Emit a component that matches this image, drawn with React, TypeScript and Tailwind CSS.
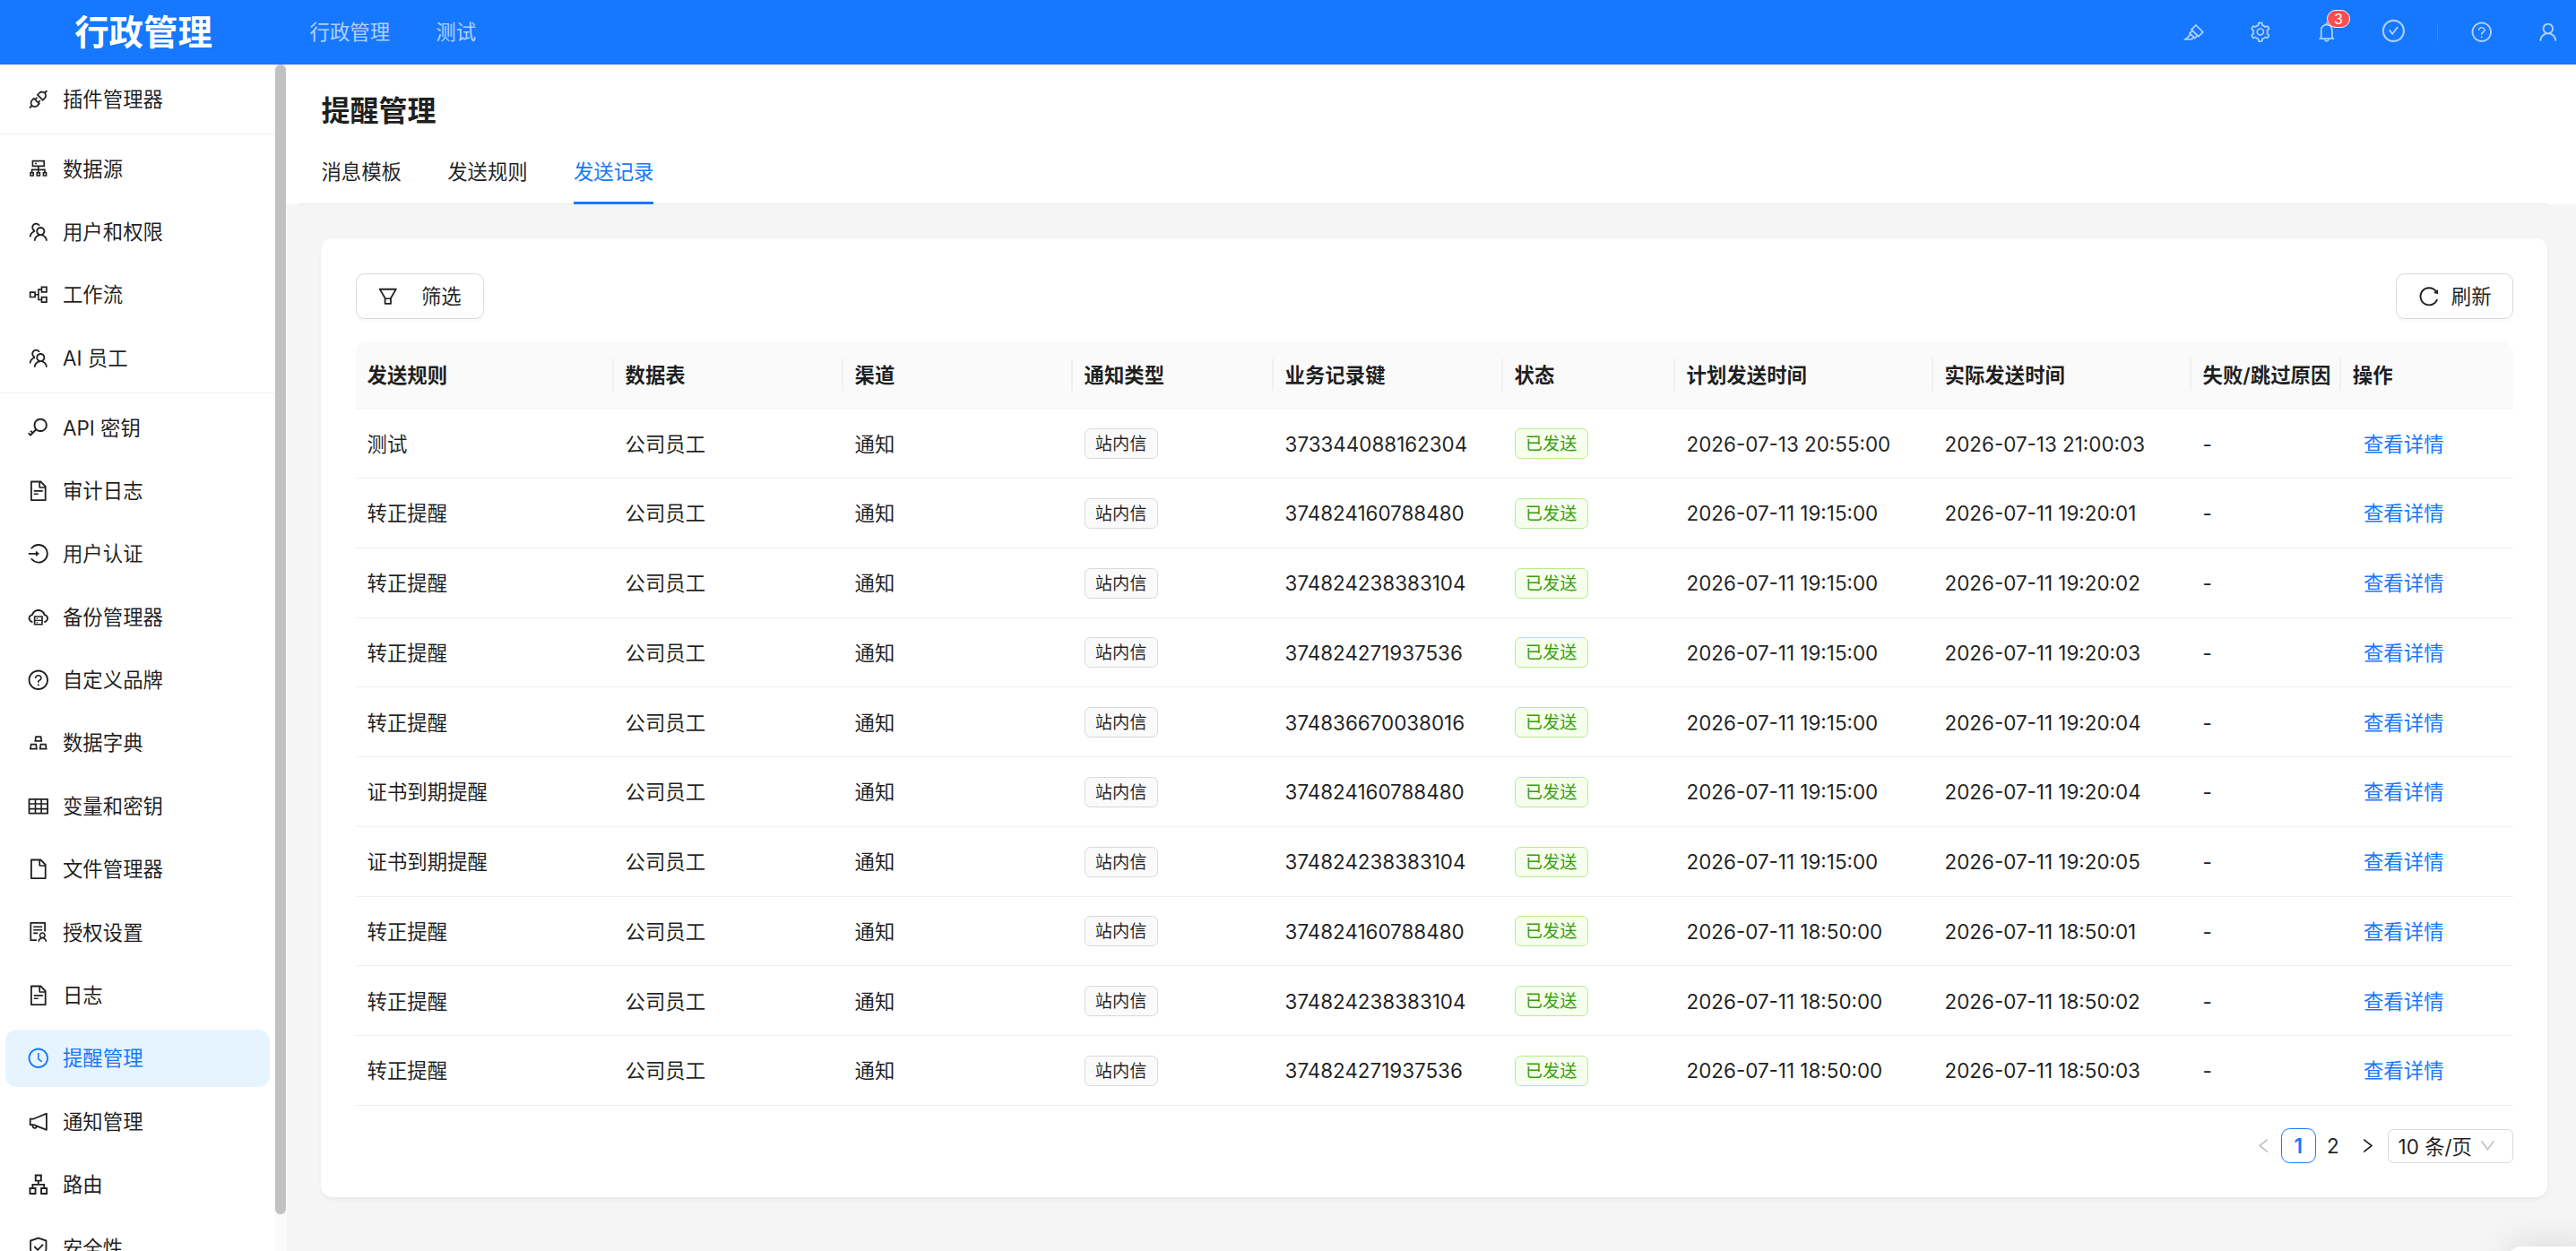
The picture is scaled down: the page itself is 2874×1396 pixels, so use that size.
import type { IconType } from 'react-icons';
import {
  AiOutlineApartment,
  AiOutlineApi,
  AiOutlineBell,
  AiOutlineCheckCircle,
  AiOutlineClockCircle,
  AiOutlineCloudServer,
  AiOutlineCluster,
  AiOutlineDown,
  AiOutlineFile,
  AiOutlineFileText,
  AiOutlineFilter,
  AiOutlineGold,
  AiOutlineHighlight,
  AiOutlineKey,
  AiOutlineLeft,
  AiOutlineLogin,
  AiOutlineNotification,
  AiOutlinePartition,
  AiOutlineQuestionCircle,
  AiOutlineReload,
  AiOutlineRight,
  AiOutlineSafety,
  AiOutlineSetting,
  AiOutlineSolution,
  AiOutlineTable,
  AiOutlineTeam,
  AiOutlineUser
} from 'react-icons/ai';

interface MenuItem {
  label: string;
  icon: IconType;
  active?: boolean;
}

interface SendRecord {
  rule: string;
  key: string;
  planned: string;
  actual: string;
}

const menuGroups: MenuItem[][] = [
  [{ label: '插件管理器', icon: AiOutlineApi }],
  [
    { label: '数据源', icon: AiOutlineCluster },
    { label: '用户和权限', icon: AiOutlineTeam },
    { label: '工作流', icon: AiOutlinePartition },
    { label: 'AI 员工', icon: AiOutlineTeam }
  ],
  [
    { label: 'API 密钥', icon: AiOutlineKey },
    { label: '审计日志', icon: AiOutlineFileText },
    { label: '用户认证', icon: AiOutlineLogin },
    { label: '备份管理器', icon: AiOutlineCloudServer },
    { label: '自定义品牌', icon: AiOutlineQuestionCircle },
    { label: '数据字典', icon: AiOutlineGold },
    { label: '变量和密钥', icon: AiOutlineTable },
    { label: '文件管理器', icon: AiOutlineFile },
    { label: '授权设置', icon: AiOutlineSolution },
    { label: '日志', icon: AiOutlineFileText },
    { label: '提醒管理', icon: AiOutlineClockCircle, active: true },
    { label: '通知管理', icon: AiOutlineNotification },
    { label: '路由', icon: AiOutlineApartment },
    { label: '安全性', icon: AiOutlineSafety }
  ]
];

const tabs = ['消息模板', '发送规则', '发送记录'];

const columns = [
  '发送规则',
  '数据表',
  '渠道',
  '通知类型',
  '业务记录键',
  '状态',
  '计划发送时间',
  '实际发送时间',
  '失败/跳过原因',
  '操作'
];

const records: SendRecord[] = [
  { rule: '测试', key: '373344088162304', planned: '2026-07-13 20:55:00', actual: '2026-07-13 21:00:03' },
  { rule: '转正提醒', key: '374824160788480', planned: '2026-07-11 19:15:00', actual: '2026-07-11 19:20:01' },
  { rule: '转正提醒', key: '374824238383104', planned: '2026-07-11 19:15:00', actual: '2026-07-11 19:20:02' },
  { rule: '转正提醒', key: '374824271937536', planned: '2026-07-11 19:15:00', actual: '2026-07-11 19:20:03' },
  { rule: '转正提醒', key: '374836670038016', planned: '2026-07-11 19:15:00', actual: '2026-07-11 19:20:04' },
  { rule: '证书到期提醒', key: '374824160788480', planned: '2026-07-11 19:15:00', actual: '2026-07-11 19:20:04' },
  { rule: '证书到期提醒', key: '374824238383104', planned: '2026-07-11 19:15:00', actual: '2026-07-11 19:20:05' },
  { rule: '转正提醒', key: '374824160788480', planned: '2026-07-11 18:50:00', actual: '2026-07-11 18:50:01' },
  { rule: '转正提醒', key: '374824238383104', planned: '2026-07-11 18:50:00', actual: '2026-07-11 18:50:02' },
  { rule: '转正提醒', key: '374824271937536', planned: '2026-07-11 18:50:00', actual: '2026-07-11 18:50:03' }
];

const gridCols =
  'grid grid-cols-[288px_256px_256px_224px_256px_192px_288px_288px_167.2px_1fr] items-center';

function TopBar() {
  return (
    <header className="flex h-[72px] shrink-0 items-center bg-[#1677ff] text-white/65">
      <div className="w-[320px] text-center text-[38.4px] leading-none font-semibold text-white">行政管理</div>
      <nav className="flex gap-[51.2px] pl-[25.6px]">
        <a>行政管理</a>
        <a>测试</a>
      </nav>
      <div className="-mr-[6px] ml-auto flex items-center">
        <div className="flex w-[74px] justify-center">
          <AiOutlineHighlight className="size-[25.6px]" />
        </div>
        <div className="flex w-[74px] justify-center">
          <AiOutlineSetting className="size-[25.6px]" />
        </div>
        <div className="flex w-[74px] justify-center">
          <div className="relative">
            <AiOutlineBell className="size-[25.6px]" />
            <span className="absolute -top-[12px] left-[12.8px] flex h-[20px] w-[26px] items-center justify-center rounded-full border-[1.6px] border-white bg-[#ff4d4f] text-[16px] leading-none text-white">
              3
            </span>
          </div>
        </div>
        <div className="flex w-[74px] justify-center pb-1">
          <AiOutlineCheckCircle className="size-[28.8px]" />
        </div>
        <div className="mx-[12px] h-5 w-px bg-white/15" />
        <div className="flex w-[74px] justify-center">
          <AiOutlineQuestionCircle className="size-[25.6px]" />
        </div>
        <div className="flex w-[74px] justify-center">
          <AiOutlineUser className="size-[25.6px]" />
        </div>
      </div>
    </header>
  );
}

function Sidebar() {
  return (
    <aside className="flex w-[320px] shrink-0 bg-[#fafafa]">
      <div className="flex w-[307px] flex-col overflow-hidden bg-white pt-[6.4px]">
        {menuGroups.map((group, index) => (
          <div
            key={index}
            className={`flex shrink-0 flex-col gap-[6.4px] ${
              index !== 0 ? 'mt-[6.4px] border-t border-[#f0f0f0] pt-[6.4px]' : ''
            }`}
          >
            {group.map(({ label, icon: Icon, active }) => (
              <a
                key={label}
                className={`mx-[6.4px] flex h-16 items-center gap-[14px] rounded-[12.8px] pl-[24px] ${
                  active ? 'bg-[#e6f4ff] text-[#1677ff]' : ''
                }`}
              >
                <Icon className="size-[25.6px]" />
                <span>{label}</span>
              </a>
            ))}
          </div>
        ))}
      </div>
      {/* Scrollbar */}
      <div className="h-[1283px] w-[12px] rounded-full bg-[#c1c1c1]" />
    </aside>
  );
}

function PageHeader() {
  return (
    <div className="flex h-[156px] shrink-0 flex-col bg-white">
      <h1 className="px-[38.4px] pt-[26px] text-[32px] leading-[51px] font-semibold">提醒管理</h1>
      <div className="mt-auto mr-[32px] ml-[12px] flex gap-[51.2px] border-b border-[#ebebeb] pl-[26.4px]">
        {tabs.map(tab => (
          <button
            key={tab}
            className={`-mb-px flex h-[72px] items-center border-b-[3px] pt-[3px] ${
              tab === '发送记录' ? 'border-[#1677ff] text-[#1677ff]' : 'border-transparent'
            }`}
          >
            {tab}
          </button>
        ))}
      </div>
    </div>
  );
}

function RecordTable() {
  return (
    <div className="mt-[24.6px]">
      <div className={`${gridCols} h-[75.7px] rounded-t-[12.8px] border-b border-[#f0f0f0] bg-[#fafafa] font-semibold`}>
        {columns.map((column, index) => (
          <div
            key={column}
            className={`flex h-[35.2px] items-center pt-px pl-[12.8px] whitespace-nowrap ${
              index !== columns.length - 1 ? 'border-r-2 border-[#f0f0f0]' : ''
            }`}
          >
            {column}
          </div>
        ))}
      </div>
      {records.map((record, index) => (
        <div key={index} className={`${gridCols} h-[77.77px] border-b border-[#f0f0f0] pt-px`}>
          <div className="pl-[12.8px]">{record.rule}</div>
          <div className="pl-[12.8px]">公司员工</div>
          <div className="pl-[12.8px]">通知</div>
          <div className="pl-[12.8px]">
            <span className="flex h-[34px] w-[82px] items-center justify-center rounded-[6.4px] border border-[#d9d9d9] bg-[#fafafa] pt-px text-[19.2px]">
              站内信
            </span>
          </div>
          <div className="pl-[12.8px]">{record.key}</div>
          <div className="pl-[12.8px]">
            <span className="flex h-[34px] w-[82px] items-center justify-center rounded-[6.4px] border border-[#b7eb8f] bg-[#f6ffed] pt-px text-[19.2px] text-[#389e0d]">
              已发送
            </span>
          </div>
          <div className="pl-[12.8px]">{record.planned}</div>
          <div className="pl-[12.8px]">{record.actual}</div>
          <div className="pl-[12.8px]">-</div>
          <div className="pl-[25px] text-[#1677ff]">查看详情</div>
        </div>
      ))}
    </div>
  );
}

function Pagination() {
  return (
    <div className="mt-[25.6px] flex h-[38.4px] items-center justify-end">
      <button className="flex size-[38.6px] items-center justify-center text-black/25">
        <AiOutlineLeft className="size-[21px]" />
      </button>
      <button className="flex size-[38.6px] items-center justify-center rounded-[9.6px] border border-[#1677ff] font-semibold text-[#1677ff]">
        1
      </button>
      <button className="flex size-[38.6px] items-center justify-center">2</button>
      <button className="flex size-[38.6px] items-center justify-center">
        <AiOutlineRight className="size-[21px]" />
      </button>
      <div className="ml-[3.2px] flex h-[38.4px] w-[139.6px] items-center justify-between rounded-[6.4px] border border-[#d9d9d9] pr-[16.4px] pl-[10.6px]">
        <span className="pt-px">10 条/页</span>
        <AiOutlineDown className="size-[20.8px] text-black/25" />
      </div>
    </div>
  );
}

export default function App() {
  return (
    <div className="relative flex h-[1396px] w-[2874px] flex-col overflow-hidden bg-[#f5f5f5] font-['Inter','Noto_Sans_CJK_SC',sans-serif] text-[22.4px] leading-[35.2px] text-black/88">
      <TopBar />
      <div className="flex min-h-0 flex-1">
        <Sidebar />
        <main className="flex min-w-0 flex-1 flex-col">
          <PageHeader />
          <section className="mt-[38.4px] mr-[32px] ml-[38.4px] rounded-[12.8px] bg-white p-[38.4px] shadow-[0_2px_3px_rgba(0,0,0,0.03),0_2px_10px_-2px_rgba(0,0,0,0.02),0_3px_6px_rgba(0,0,0,0.02)]">
            <div className="flex justify-between">
              <button className="flex h-[51.2px] w-[143px] items-center rounded-[9.6px] border border-[#d9d9d9] pl-[22.6px] shadow-[0_3px_0_rgba(0,0,0,0.02)]">
                <AiOutlineFilter className="size-[25.6px]" />
                <span className="ml-[24px] pt-px">筛选</span>
              </button>
              <button className="flex h-[51.2px] w-[130.4px] items-center justify-center gap-[12px] rounded-[9.6px] border border-[#d9d9d9] shadow-[0_3px_0_rgba(0,0,0,0.02)]">
                <AiOutlineReload className="size-[25.6px]" />
                <span className="pt-px">刷新</span>
              </button>
            </div>
            <RecordTable />
            <Pagination />
          </section>
        </main>
      </div>
      {/* Floating panel peeking in from below */}
      <div className="absolute -right-[20px] -bottom-[60px] h-[65px] w-[97px] rounded-[16px] bg-white shadow-[0_-4px_40px_rgba(0,0,0,0.1)]" />
    </div>
  );
}
